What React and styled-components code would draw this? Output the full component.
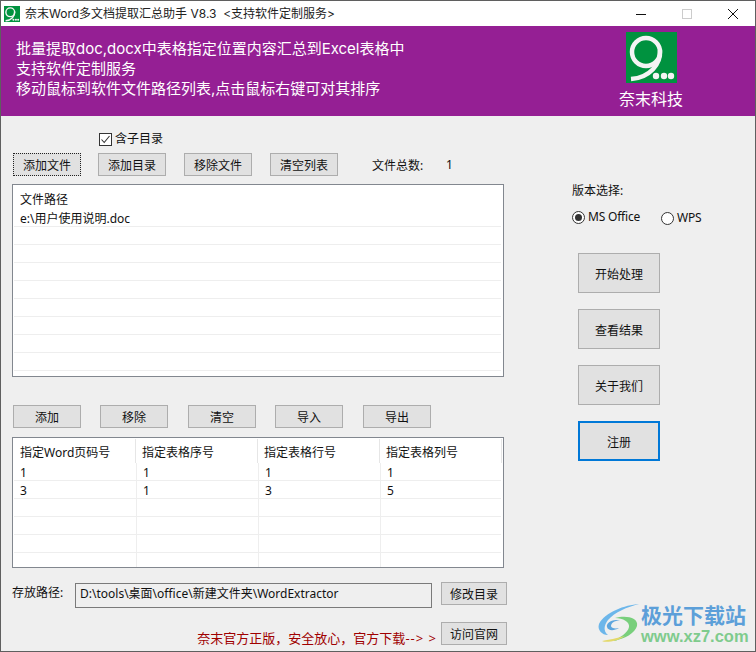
import React from 'react';
import styled, { createGlobalStyle } from 'styled-components';

const Global = createGlobalStyle`
  html, body { margin: 0; padding: 0; background: #efefef; }
  * { box-sizing: border-box; }
  body { font-family: "Noto Sans", "Noto Sans CJK SC", sans-serif; font-size: 12px; color: #111; }
`;

const Window = styled.div`
  position: relative;
  width: 756px;
  height: 652px;
  display: flex;
  flex-direction: column;
  background: #efefef;
  border: 1px solid #5f5f5f;
  overflow: hidden;
`;

const TitleBar = styled.header`
  height: 25px;
  flex: none;
  background: #fff;
  display: flex;
  align-items: center;
  padding-left: 3px;
`;
const AppIcon = styled.svg`
  width: 16px;
  height: 16px;
  flex: none;
  margin-right: 5px;
`;
const TitleText = styled.div`
  flex: 1;
  font-family: Inter, "Noto Sans CJK SC", sans-serif;
  line-height: 24px;
  white-space: pre;
  color: #222;
`;
const WinControls = styled.div`
  display: flex;
  align-items: center;
  height: 100%;
  padding-right: 16px;
  gap: 34px;
`;
const WinIcon = styled.svg`
  width: 12px;
  height: 12px;
  display: block;
`;

const Banner = styled.section`
  height: 90px;
  flex: none;
  background: #951f94;
  color: #fff;
  display: flex;
  justify-content: space-between;
`;
const BannerLines = styled.div`
  padding: 13px 0 0 15px;
  font-family: Inter, "Noto Sans CJK SC", sans-serif;
  font-size: 15px;
  line-height: 20px;
`;
const Brand = styled.div`
  width: 64px;
  margin-right: 72px;
  padding-top: 6px;
  display: flex;
  flex-direction: column;
  align-items: center;
`;
const BrandLogo = styled.svg`
  width: 51px;
  height: 51px;
  display: block;
`;
const BrandName = styled.div`
  font-size: 16px;
  line-height: 22px;
  margin-top: 5px;
  white-space: nowrap;
`;

const Main = styled.main`
  flex: 1;
  display: flex;
`;
const LeftCol = styled.div`
  width: 571px;
  padding: 14px 0 0 11px;
  display: flex;
  flex-direction: column;
`;
const RightCol = styled.aside`
  flex: 1;
  padding-top: 66px;
  display: flex;
  flex-direction: column;
`;

const CheckRow = styled.label`
  height: 18px;
  margin-left: 87px;
  display: flex;
  align-items: center;
  gap: 3px;
  line-height: 18px;
`;
const CheckBox = styled.span`
  width: 13px;
  height: 13px;
  border: 1px solid #333;
  background: #fff;
  display: flex;
  align-items: center;
  justify-content: center;
`;

const Toolbar = styled.div`
  display: grid;
  grid-template-columns: ${p => p.$cols};
  align-items: center;
  margin-top: ${p => p.$top}px;
  margin-left: 1px;
`;
const Button = styled.button`
  width: 68px;
  height: 23px;
  padding: 2px 0 0;
  font: inherit;
  line-height: 18px;
  color: #111;
  background: #e1e1e1;
  border: 1px ${p => (p.$focus ? 'dotted #222' : 'solid #adadad')};
`;
const CountLabel = styled.span`
  white-space: nowrap;
  padding-top: 1px;
`;
const CountValue = styled.span`
  color: #111;
`;

const Panel = styled.div`
  width: 492px;
  height: ${p => p.$h}px;
  margin-top: ${p => p.$top}px;
  border: 1px solid #82878f;
  background: #fff;
  padding: 1px 2px 0 1px;
`;
const ListHead = styled.div`
  height: 23px;
  line-height: 27px;
  padding-left: 6px;
`;
const ListRow = styled.div`
  height: 18px;
  line-height: 20px;
  padding-left: 6px;
  border-bottom: 1px solid #eeeeee;
`;

const TableHead = styled.div`
  display: grid;
  grid-template-columns: repeat(4, 122px);
`;
const TableBody = styled.div`
  display: grid;
  grid-template-columns: 123px 122px 122px 1fr;
`;
const HeadCell = styled.div`
  height: 24px;
  line-height: 28px;
  padding-left: 6px;
  border-right: 1px solid #e6e6e6;
`;
const Cell = styled.div`
  height: 18px;
  line-height: 20px;
  padding-left: 6px;
  border-bottom: 1px solid #eeeeee;
  &:not(:nth-child(4n)) {
    border-right: 1px solid #eeeeee;
  }
`;
const LastCell = styled(Cell)`
  height: 14px;
  border-bottom: none;
`;

const PathRow = styled.div`
  display: flex;
  align-items: flex-start;
  margin-top: 14px;
  width: 495px;
`;
const PathLabel = styled.span`
  width: 63px;
  flex: none;
  line-height: 22px;
`;
const PathField = styled.div`
  width: 357px;
  height: 25px;
  margin-top: 1px;
  padding-left: 4px;
  line-height: 20px;
  border: 1px solid #7a7a7a;
  background: #efefef;
  white-space: nowrap;
`;
const SmallButton = styled(Button)`
  width: 66px;
  margin-left: 9px;
`;
const FootRow = styled.div`
  display: flex;
  align-items: center;
  justify-content: flex-end;
  margin-top: 12px;
  width: 495px;
`;
const FootNote = styled.span`
  color: #a00000;
  font-size: 13px;
  line-height: 18px;
  margin-top: 9px;
  margin-right: -5px;
  white-space: pre;
`;
const FootArrow = styled.span`
  letter-spacing: 1px;
`;

const VersionLabel = styled.div`
  line-height: 18px;
`;
const RadioRow = styled.div`
  display: flex;
  margin-top: 10px;
  align-items: flex-start;
`;
const RadioItem = styled.label`
  display: flex;
  align-items: center;
  gap: 3px;
  height: 14px;
  line-height: 14px;
  letter-spacing: -0.2px;
  width: ${p => p.$w}px;
  margin-top: ${p => p.$top || 0}px;
`;
const RadioCircle = styled.span`
  width: 13px;
  height: 13px;
  flex: none;
  border-radius: 50%;
  border: 1px solid #333;
  background: #fff;
  display: flex;
  align-items: center;
  justify-content: center;
  &::after {
    content: '';
    width: 7px;
    height: 7px;
    border-radius: 50%;
    background: ${p => (p.$on ? '#333' : 'transparent')};
  }
`;
const ActionStack = styled.div`
  display: flex;
  flex-direction: column;
  gap: 16px;
  margin: 28px 0 0 6px;
`;
const ActionButton = styled.button`
  width: 82px;
  height: 40px;
  padding: 2px 0 0;
  font: inherit;
  color: #111;
  background: #e1e1e1;
  border: ${p => (p.$primary ? '2px solid #0078d7' : '1px solid #adadad')};
`;

const Watermark = styled.div`
  position: absolute;
  left: 594px;
  top: 599px;
  width: 152px;
  height: 44px;
  display: flex;
  align-items: flex-start;
`;
const Swirl = styled.svg`
  width: 46px;
  height: 44px;
  flex: none;
`;
const MarkText = styled.div`
  display: flex;
  flex-direction: column;
  gap: 3px;
  padding-top: 3px;
`;
const MarkName = styled.div`
  font-family: "Noto Sans CJK SC", sans-serif;
  font-weight: 700;
  font-size: 21px;
  line-height: 22px;
  color: #5c9fd9;
  white-space: nowrap;
`;
const MarkUrl = styled.div`
  font-family: "Liberation Sans", sans-serif;
  font-weight: 700;
  font-size: 16.5px;
  line-height: 16px;
  color: #7fcb8d;
  white-space: nowrap;
`;

const NineMark = () => (
  <>
    <rect width="51" height="51" fill="#00923f" />
    <circle cx="20" cy="20" r="14" fill="none" stroke="#f4f4f4" strokeWidth="4.500" />
    <path d="M34 18C35 32 24 45.500 5 47" fill="none" stroke="#f4f4f4" strokeWidth="4.500" />
    <g fill="#f4f4f4">
      <circle cx="30" cy="44" r="3.200" />
      <circle cx="38" cy="44" r="3.200" />
      <circle cx="45" cy="44" r="3.200" />
    </g>
  </>
);

const emptyList = Array.from({ length: 8 });
const tableRows = [
  ['1', '1', '1', '1'],
  ['3', '1', '3', '5'],
  ['', '', '', ''],
  ['', '', '', ''],
  ['', '', '', ''],
];

export default function App() {
  return (
    <>
      <Global />
      <Window>
        <TitleBar>
          <AppIcon viewBox="0 0 51 51"><NineMark /></AppIcon>
          <TitleText>奈末Word多文档提取汇总助手 V8.3  &lt;支持软件定制服务&gt;</TitleText>
          <WinControls>
            <WinIcon viewBox="0 0 12 12"><path d="M1 6.500H11" stroke="#111" strokeWidth="1" /></WinIcon>
            <WinIcon viewBox="0 0 12 12"><rect x="1.500" y="1.500" width="9" height="9" fill="none" stroke="#ccc" /></WinIcon>
            <WinIcon viewBox="0 0 12 12"><path d="M1 1L11 11M11 1L1 11" stroke="#111" strokeWidth="1" /></WinIcon>
          </WinControls>
        </TitleBar>

        <Banner>
          <BannerLines>
            <div>批量提取doc,docx中表格指定位置内容汇总到Excel表格中</div>
            <div>支持软件定制服务</div>
            <div>移动鼠标到软件文件路径列表,点击鼠标右键可对其排序</div>
          </BannerLines>
          <Brand>
            <BrandLogo viewBox="0 0 51 51"><NineMark /></BrandLogo>
            <BrandName>奈末科技</BrandName>
          </Brand>
        </Banner>

        <Main>
          <LeftCol>
            <CheckRow>
              <CheckBox>
                <svg width="11" height="11" viewBox="0 0 11 11"><path d="M1.500 5.500L4.200 8.500L9.500 2" fill="none" stroke="#333" strokeWidth="1.100" /></svg>
              </CheckBox>
              含子目录
            </CheckRow>
            <Toolbar $cols="85px 86px 86px 102px 74px auto" $top={5}>
              <Button $focus>添加文件</Button>
              <Button>添加目录</Button>
              <Button>移除文件</Button>
              <Button>清空列表</Button>
              <CountLabel>文件总数:</CountLabel>
              <CountValue>1</CountValue>
            </Toolbar>

            <Panel $h={193} $top={8}>
              <ListHead>文件路径</ListHead>
              <ListRow>e:\用户使用说明.doc</ListRow>
              {emptyList.map((_, i) => <ListRow key={i} />)}
            </Panel>

            <Toolbar $cols="87px 88px 87px 88px auto" $top={28}>
              <Button>添加</Button>
              <Button>移除</Button>
              <Button>清空</Button>
              <Button>导入</Button>
              <Button>导出</Button>
            </Toolbar>

            <Panel $h={131} $top={9}>
              <TableHead>
                <HeadCell>指定Word页码号</HeadCell>
                <HeadCell>指定表格序号</HeadCell>
                <HeadCell>指定表格行号</HeadCell>
                <HeadCell>指定表格列号</HeadCell>
              </TableHead>
              <TableBody>
                {tableRows.map((r, i) => r.map((v, j) => <Cell key={`${i}-${j}`}>{v}</Cell>))}
                {[0, 1, 2, 3].map(i => <LastCell key={i} />)}
              </TableBody>
            </Panel>

            <PathRow>
              <PathLabel>存放路径:</PathLabel>
              <PathField>D:\tools\桌面\office\新建文件夹\WordExtractor</PathField>
              <SmallButton>修改目录</SmallButton>
            </PathRow>
            <FootRow>
              <FootNote>奈末官方正版，安全放心，官方下载<FootArrow>--&gt; &gt;</FootArrow></FootNote>
              <SmallButton>访问官网</SmallButton>
            </FootRow>
          </LeftCol>

          <RightCol>
            <VersionLabel>版本选择:</VersionLabel>
            <RadioRow>
              <RadioItem $w={89}><RadioCircle $on />MS Office</RadioItem>
              <RadioItem $w={60} $top={1}><RadioCircle />WPS</RadioItem>
            </RadioRow>
            <ActionStack>
              <ActionButton>开始处理</ActionButton>
              <ActionButton>查看结果</ActionButton>
              <ActionButton>关于我们</ActionButton>
              <ActionButton $primary>注册</ActionButton>
            </ActionStack>
          </RightCol>
        </Main>

        <Watermark>
          <Swirl viewBox="0 0 46 44">
            <path d="M44 4C30 5 10 12 4 24C2 30 7 35 13 35C8 31 9 25 13 20C20 12 32 7 44 4Z" fill="#6cb6ea" />
            <path d="M21 20C15 20 11 24 12 27C13 31 19 31 24 28C20 29 16 28 16 26C16 23 19 21 25 20Z" fill="#5da5dd" />
            <path d="M20 18C30 15 44 17 42 26C40 33 30 39 18 41C24 38 33 33 34 27C35 22 28 18 20 18Z" fill="#78cf7c" />
            <path d="M7 41C13 40 22 38 30 36C26 39 20 41 16 41.500C12 42 9 42 7 41Z" fill="#e4d96a" />
          </Swirl>
          <MarkText>
            <MarkName>极光下载站</MarkName>
            <MarkUrl>www.xz7.com</MarkUrl>
          </MarkText>
        </Watermark>
      </Window>
    </>
  );
}
